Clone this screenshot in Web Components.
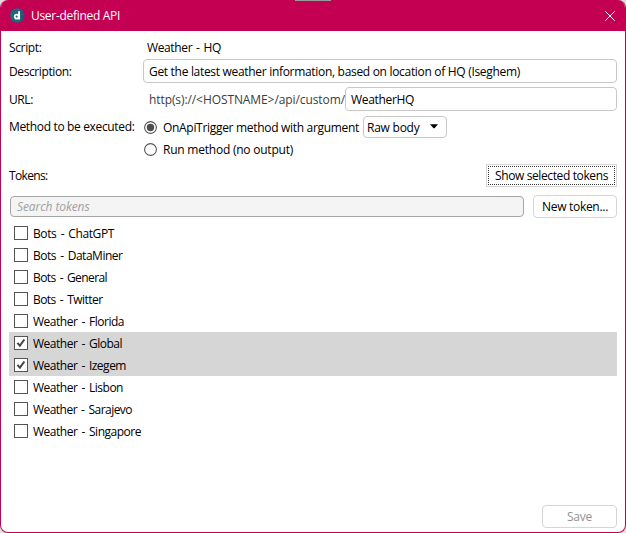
<!DOCTYPE html>
<html lang="en">
<head>
<meta charset="utf-8">
<title>User-defined API</title>
<style>
html,body{margin:0;height:100%;overflow:hidden;background:#dedede}
body{font:12px/16px "Open Sans","Noto Sans",sans-serif;color:#000}
</style>
</head>
<body>
<api-window></api-window>
<script>
const define=(name,html,setup)=>{
  const t=document.createElement('template');t.innerHTML=html;
  customElements.define(name,class extends HTMLElement{
    connectedCallback(){
      if(this.shadowRoot)return;
      this.attachShadow({mode:'open'}).append(t.content.cloneNode(true));
      if(setup)setup(this,this.shadowRoot);
    }
  });
};

/* Text run whose tracking is adjusted to a given advance width (w). */
define('ui-text',`<style>
:host{display:block;white-space:nowrap;height:16px;line-height:16px;flex:none}
span{display:inline-block}
</style><span><slot></slot></span>`,(el,r)=>{
  const s=r.querySelector('span'),w=+el.getAttribute('w');
  if(!w)return;
  el.style.width=w+'px';
  s.style.letterSpacing=(w-s.getBoundingClientRect().width)/el.textContent.length+'px';
});

define('title-bar',`<style>
:host{display:flex;align-items:center;box-sizing:border-box;height:31px;background:#c40052;color:#fff;padding:0 10px 0 9px;position:relative}
svg{display:block;flex:none}
ui-text{margin:1px auto 0 6px}
.grip{position:absolute;left:294px;top:0;width:36px;height:1px;background:#9b9b9b}
</style>
<div class="grip"></div>
<svg width="15" height="15" viewBox="0 0 15 15"><defs><linearGradient id="g" x2="1"><stop offset="0" stop-color="#176b83"/><stop offset=".55" stop-color="#236782"/><stop offset="1" stop-color="#214f78"/></linearGradient></defs><circle cx="7.5" cy="7.5" r="7.3" fill="url(#g)"/><ellipse cx="6.7" cy="8.6" rx="2" ry="2" fill="none" stroke="#fff" stroke-width="1.8"/><path d="M9.1 3.2V11.5" stroke="#fff" stroke-width="1.9"/></svg>
<ui-text w="89">User-defined API</ui-text>
<svg width="10" height="10" viewBox="0 0 10 10"><path d="M.3.3L9.7 9.7M9.7.3L.3 9.7" stroke="#fff" stroke-width="1" fill="none"/></svg>`);

define('text-box',`<style>
:host{display:flex;align-items:center;box-sizing:border-box;height:24px;border:1px solid #c8c8c8;border-radius:4px;background:#fff;padding:2px 5px 0}
:host([search]){height:21px;border-color:#a5a5a5;background:#f4f4f4;color:#a0a0a0;font-style:italic;padding:0 6px}
</style><slot></slot>`);

define('push-button',`<style>
:host{display:flex;align-items:center;justify-content:center;box-sizing:border-box;height:23px;border:1px solid #d5d5d5;border-radius:4px;background:#fff;flex:none}
:host([disabled]){color:#929292}
:host([focused]){border-radius:0;padding:1px}
div{display:flex;align-items:center;justify-content:center;flex:1;box-sizing:border-box;height:19px;padding-top:1px}
:host([focused]) div{border:1px dotted #333;padding-top:0}
</style><div><slot></slot></div>`);

define('drop-down',`<style>
:host{display:flex;align-items:center;box-sizing:border-box;width:84px;height:22px;border:1px solid #c8c8c8;border-radius:4px;padding:1px 8px 0 3px;justify-content:space-between}
svg{display:block;margin-top:-3px}
</style><slot></slot><svg width="8" height="5" viewBox="0 0 8 5"><path d="M0 .2H8L4.5 4.3H3.5Z"/></svg>`);

define('radio-option',`<style>
:host{display:flex;align-items:center;height:22px}
svg{display:block;margin-right:6px}
.dot{display:none}:host([checked]) .dot{display:block}
slot{display:flex;align-items:center;gap:4px}
</style><svg width="13" height="13" viewBox="0 0 13 13"><circle cx="6.5" cy="6.5" r="5.9" fill="#fff" stroke="#555" stroke-width="1.1"/><circle class="dot" cx="6.5" cy="6.5" r="3.7" fill="#4d4d4d"/></svg><slot></slot>`);

define('token-row',`<style>
:host{display:flex;align-items:center;height:22px;padding-left:5px;gap:5px}
:host([checked]){background:#d6d6d6}
svg{display:block}
path{display:none}:host([checked]) path{display:block}
ui-text{position:relative;top:1px;word-spacing:1.5px}
</style><svg width="14" height="14" viewBox="0 0 14 14"><rect x=".5" y=".5" width="13" height="13" fill="#fff" stroke="#555"/><path d="M3.4 6.9L5.9 9.7L10.4 3.5" fill="none" stroke="#444" stroke-width="2"/></svg>`,(el,r)=>{
  const t=document.createElement('ui-text');
  t.setAttribute('w',el.getAttribute('w'));t.textContent=el.getAttribute('label');
  r.append(t);
});

define('token-list',`<style>:host{display:block}</style>`,(el,r)=>{
  for(const [label,w,on] of [['Bots - ChatGPT',81],['Bots - DataMiner',89.5],['Bots - General',74],['Bots - Twitter',69.5],['Weather - Florida',91],['Weather - Global',89,1],['Weather - Izegem',93,1],['Weather - Lisbon',90],['Weather - Sarajevo',99],['Weather - Singapore',108]]){
    const t=document.createElement('token-row');
    t.setAttribute('label',label);t.setAttribute('w',w);if(on)t.setAttribute('checked','');
    r.append(t);
  }
});

define('form-row',`<style>
:host{display:grid;grid-template-columns:134px 1fr;align-items:center}
.v{display:flex;align-items:center}
::slotted([slot=label]){margin-top:2px}
</style><slot name="label"></slot><div class="v"><slot></slot></div>`);

define('api-window',`<style>
:host{display:flex;flex-direction:column;box-sizing:border-box;width:626px;height:533px;border:1px solid #c40052;border-top:0;border-radius:8px;overflow:hidden;background:#fff}
main{flex:1;display:flex;flex-direction:column;padding:0 8px 4px}
.script{height:28px;padding-top:4px;box-sizing:border-box}
.desc,.url{height:24px}
.url{margin-top:4px}
.desc text-box,.url text-box{flex:1}
.meth{margin-top:5px;display:grid;grid-template-columns:135px 1fr}
.gap{margin-left:4px;margin-top:2px;word-spacing:1.2px}.gap2{margin-left:6px;margin-top:2px;color:#3c3c3c}
.tokens{display:flex;justify-content:space-between;align-items:center;height:23px;margin-top:4px}
.search{display:flex;align-items:center;gap:9px;height:23px;margin-top:8px;padding-left:1px}
.search text-box{flex:1}
token-list{margin-top:4px}
footer{margin-top:auto;display:flex;justify-content:flex-end}
</style>
<title-bar></title-bar>
<main>
<form-row class="script"><ui-text slot="label" w="32.5">Script:</ui-text><ui-text class="gap" w="74">Weather - HQ</ui-text></form-row>
<form-row class="desc"><ui-text slot="label" w="62.5">Description:</ui-text><text-box><ui-text w="371">Get the latest weather information, based on location of HQ (Iseghem)</ui-text></text-box></form-row>
<form-row class="url"><ui-text slot="label" w="24">URL:</ui-text><ui-text class="gap2" w="196">http(s)://&lt;HOSTNAME&gt;/api/custom/</ui-text><text-box><ui-text w="63">WeatherHQ</ui-text></text-box></form-row>
<div class="meth"><ui-text style="margin-top:3px" w="125.5">Method to be executed:</ui-text><div>
<radio-option checked><ui-text style="margin-top:2px" w="196">OnApiTrigger method with argument</ui-text><drop-down><ui-text w="52.5">Raw body</ui-text></drop-down></radio-option>
<radio-option><ui-text style="margin-top:1px" w="130">Run method (no output)</ui-text></radio-option></div></div>
<div class="tokens"><ui-text w="38.5">Tokens:</ui-text><push-button focused style="width:131px"><ui-text w="113">Show selected tokens</ui-text></push-button></div>
<div class="search"><text-box search><ui-text w="72.5">Search tokens</ui-text></text-box><push-button style="width:84px"><ui-text w="66">New token...</ui-text></push-button></div>
<token-list></token-list>
<footer><push-button disabled style="width:75px"><ui-text w="25">Save</ui-text></push-button></footer>
</main>`);
</script>
</body>
</html>
